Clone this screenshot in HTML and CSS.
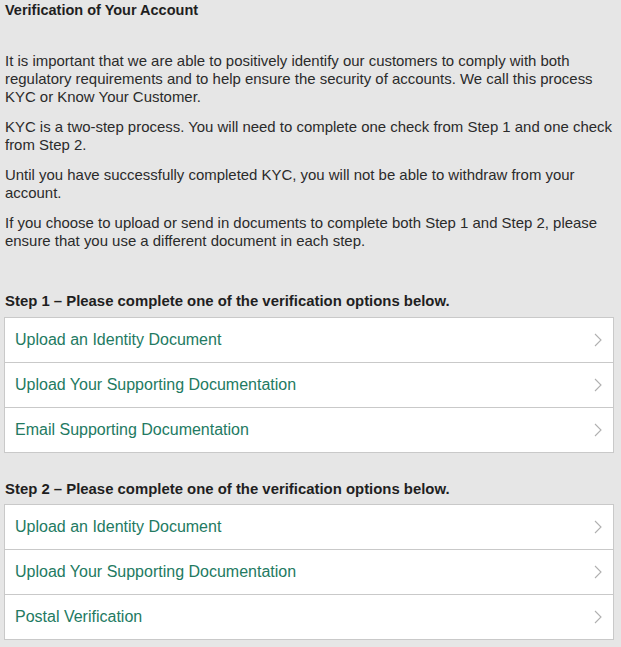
FILE: index.html
```html
<!DOCTYPE html>
<html>
<head>
<meta charset="utf-8">
<link rel="stylesheet" href="styles.css">
</head>
<body>
<div class="page">
  <h3 class="title">Verification of Your Account</h3>
  <p class="para first">It is important that we are able to positively identify our customers to comply with both regulatory requirements and to help ensure the security of accounts. We call this process KYC or Know Your Customer.</p>
  <p class="para">KYC is a two-step process. You will need to complete one check from Step 1 and one check from Step 2.</p>
  <p class="para">Until you have successfully completed KYC, you will not be able to withdraw from your account.</p>
  <p class="para">If you choose to upload or send in documents to complete both Step 1 and Step 2, please ensure that you use a different document in each step.</p>

  <h4 class="step step1">Step 1 – Please complete one of the verification options below.</h4>
  <ul class="options">
    <li class="option"><span class="label">Upload an Identity Document</span><svg class="chev" viewBox="0 0 8 14" width="8" height="14"><path d="M1 1 L7 7 L1 13" fill="none" stroke="#b0b0b0" stroke-width="1.1"/></svg></li>
    <li class="option"><span class="label">Upload Your Supporting Documentation</span><svg class="chev" viewBox="0 0 8 14" width="8" height="14"><path d="M1 1 L7 7 L1 13" fill="none" stroke="#b0b0b0" stroke-width="1.1"/></svg></li>
    <li class="option"><span class="label">Email Supporting Documentation</span><svg class="chev" viewBox="0 0 8 14" width="8" height="14"><path d="M1 1 L7 7 L1 13" fill="none" stroke="#b0b0b0" stroke-width="1.1"/></svg></li>
  </ul>

  <h4 class="step step2">Step 2 – Please complete one of the verification options below.</h4>
  <ul class="options">
    <li class="option"><span class="label">Upload an Identity Document</span><svg class="chev" viewBox="0 0 8 14" width="8" height="14"><path d="M1 1 L7 7 L1 13" fill="none" stroke="#b0b0b0" stroke-width="1.1"/></svg></li>
    <li class="option"><span class="label">Upload Your Supporting Documentation</span><svg class="chev" viewBox="0 0 8 14" width="8" height="14"><path d="M1 1 L7 7 L1 13" fill="none" stroke="#b0b0b0" stroke-width="1.1"/></svg></li>
    <li class="option"><span class="label">Postal Verification</span><svg class="chev" viewBox="0 0 8 14" width="8" height="14"><path d="M1 1 L7 7 L1 13" fill="none" stroke="#b0b0b0" stroke-width="1.1"/></svg></li>
  </ul>
</div>
</body>
</html>
```

FILE: styles.css
```css
html, body {
  margin: 0;
  padding: 0;
  background: #e6e6e6;
}
body {
  font-family: "Liberation Sans", Arial, sans-serif;
  color: #2b2b2b;
}
.page {
  width: 610px;
  padding-left: 4px;
}
.title {
  margin: 0;
  padding-left: 1px;
  font-size: 14.5px;
  line-height: 20px;
  font-weight: bold;
  color: #1f1f1f;
}
.para {
  margin: 0 -6px 12px 0;
  padding-left: 1px;
  font-size: 14.95px;
  line-height: 18px;
}
.para.first {
  margin-top: 32px;
}
.step {
  margin: 42px 0 7px 0;
  padding-left: 1px;
  font-size: 14.9px;
  line-height: 18px;
  font-weight: bold;
  color: #1f1f1f;
}
.step.step2 {
  margin-top: 27px;
  margin-bottom: 6px;
}
.options {
  list-style: none;
  margin: 0;
  padding: 0;
  background: #fff;
  border: 1px solid #c9c9c9;
}
.option {
  display: flex;
  align-items: center;
  justify-content: space-between;
  height: 44px;
  padding: 0 11px 0 10px;
  border-top: 1px solid #c9c9c9;
}
.option:first-child {
  border-top: none;
}
.label {
  font-size: 16px;
  color: #237a62;
}
.chev {
  display: block;
}
```
